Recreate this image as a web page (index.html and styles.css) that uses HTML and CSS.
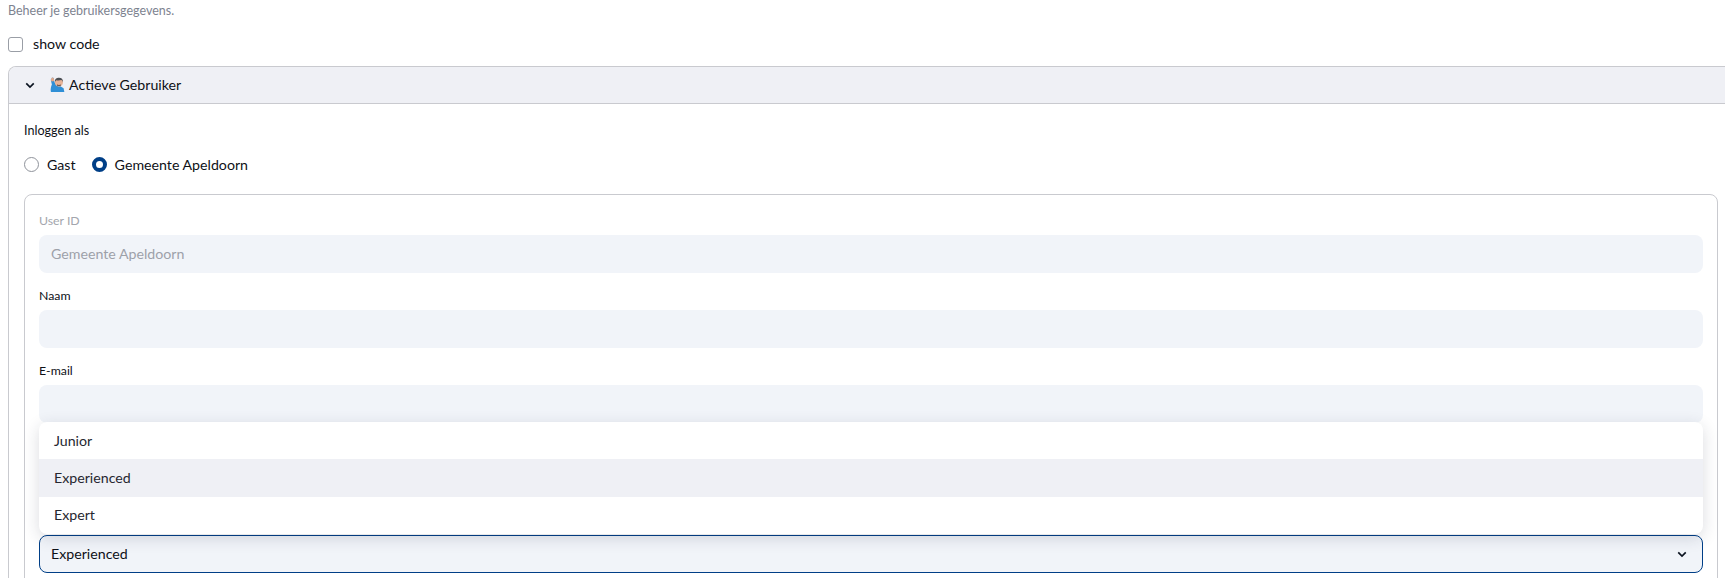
FILE: index.html
```html
<!DOCTYPE html>
<html lang="nl">
<head>
<meta charset="utf-8">
<title>Actieve Gebruiker</title>
<link rel="stylesheet" href="styles.css">
</head>
<body>
<main class="page">
  <p class="caption">Beheer je gebruikersgegevens.</p>
  <label class="check-row"><span class="checkbox"></span><span>show code</span></label>
  <section class="expander">
    <header class="expander-head">
      <svg class="chev" viewBox="0 0 12 8" width="10" height="7"><path d="M1.500 1.500 6 6l4.500-4.500" fill="none" stroke="#0b1320" stroke-width="2"/></svg>
      <svg class="emoji" viewBox="0 0 16 17" width="15" height="16">
        <path d="M1 16c-.8-3 .2-6 1-8l-1.200-5L2.500 .5 4 1l.6 4 2 3.500L8.500 10h3l3 2 .8 4z" fill="#2f8fd6"/>
        <path d="M.8 3.200 2 .6l2 .4.500 3.200-2.500.6z" fill="#e3a98a"/>
        <circle cx="9.500" cy="5.500" r="4.300" fill="#e7b296"/>
        <path d="M5.200 5.500C5 2 7 .8 9.600.8c2.800 0 4.400 1.600 4.200 4.700-.6-1.200-1-1.900-1.600-2.300-2 .6-4.200.6-5.400.2-.7.5-1.200 1.100-1.600 2.100z" fill="#4b4f55"/>
        <path d="M7.500 7.800c1.200 1 3 1 4.100 0l-.2 1.900H7.700z" fill="#6b5a52"/>
      </svg>
      <span class="head-title">Actieve Gebruiker</span>
    </header>
    <div class="expander-body">
      <div class="group-label">Inloggen als</div>
      <div class="radios">
        <label class="radio-item"><span class="radio"></span><span>Gast</span></label>
        <label class="radio-item"><span class="radio radio-on"></span><span>Gemeente Apeldoorn</span></label>
      </div>
      <form class="card">
        <div class="field field-disabled">
          <div class="field-label">User ID</div>
          <div class="input"><span class="input-text">Gemeente Apeldoorn</span></div>
        </div>
        <div class="field">
          <div class="field-label">Naam</div>
          <div class="input"></div>
        </div>
        <div class="field">
          <div class="field-label">E-mail</div>
          <div class="input"></div>
        </div>
        <div class="field">
          <div class="field-label"></div>
          <div class="input"></div>
        </div>
        <div class="field select-field">
          <ul class="menu">
            <li class="menu-item">Junior</li>
            <li class="menu-item menu-item-active">Experienced</li>
            <li class="menu-item">Expert</li>
          </ul>
          <div class="field-label"></div>
          <div class="input select">
            <span class="input-text">Experienced</span>
            <svg viewBox="0 0 12 8" width="10" height="7"><path d="M1.500 1.500 6 6l4.500-4.500" fill="none" stroke="#0b1320" stroke-width="2"/></svg>
          </div>
        </div>
      </form>
    </div>
  </section>
</main>
</body>
</html>
```
FILE: styles.css
```css
* { box-sizing: border-box; }
html, body { margin: 0; height: 578px; overflow: hidden; background: #fff; }
body { font-family: "Lato", "Noto Sans", "Liberation Sans", sans-serif; font-size: 14.2px; color: #0e1117; }
.page { padding: 0 0 0 8px; }
.caption { margin: 0; height: 20px; font-size: 12.500px; line-height: 21px; color: #7d8390; }
.check-row { display: flex; align-items: center; gap: 10px; height: 16px; margin-top: 16px; line-height: 16px; }
.checkbox { width: 15px; height: 15px; border: 1px solid #9a9ea6; border-radius: 3px; background: #fff; }
.expander { margin: 14px -10px 0 0; border: 1px solid #c9cacf; border-radius: 8px 8px 0 0; border-bottom: 0; height: 540px; }
.expander-head { display: flex; align-items: center; height: 37px; padding-left: 16px; background: #eff0f5; border-bottom: 1px solid #c9cacf; border-radius: 7px 7px 0 0; }
.head-title { padding-bottom: 2px; }
.chev { margin-right: 15px; }
.emoji { margin-right: 4px; }
.expander-body { padding: 14px 15px 0; }
.group-label { height: 24px; line-height: 25px; font-size: 12.600px; }
.radios { display: flex; gap: 16px; height: 24px; margin-top: 10px; align-items: center; }
.radio-item { display: flex; align-items: center; gap: 8px; }
.radio { width: 15px; height: 15px; border-radius: 50%; border: 1px solid #8f939b; background: #fff; }
.radio-on { border: 4.500px solid #003f87; }
.card { margin-top: 18px; padding: 15px 14px 0; border: 1px solid #c9cacf; border-radius: 8px; width: 1694px; height: 400px; }
.field { margin-bottom: 12px; }
.field-label { height: 25px; line-height: 21px; font-size: 12.300px; }
.field-disabled .field-label { color: #a3a6ad; }
.input { display: flex; align-items: center; height: 38px; padding: 0 12px; background: #f1f4f9; border-radius: 8px; }
.input-text { padding-bottom: 2px; }
.field-disabled .input { color: #9da1a9; }
.select-field { position: relative; }
.select { justify-content: space-between; border: 1px solid #003f87; padding: 0 15px 0 11px; }
.menu { position: absolute; left: 0; right: 0; bottom: 39px; margin: 0; padding: 0; list-style: none; background: #fff; border-radius: 8px; box-shadow: 0 4px 16px rgba(30, 40, 60, .16); z-index: 2; }
.menu-item { display: flex; align-items: center; height: 37.300px; padding: 0 15px 1px; color: #262730; }
.menu-item-active { background: #eff0f5; }
```
